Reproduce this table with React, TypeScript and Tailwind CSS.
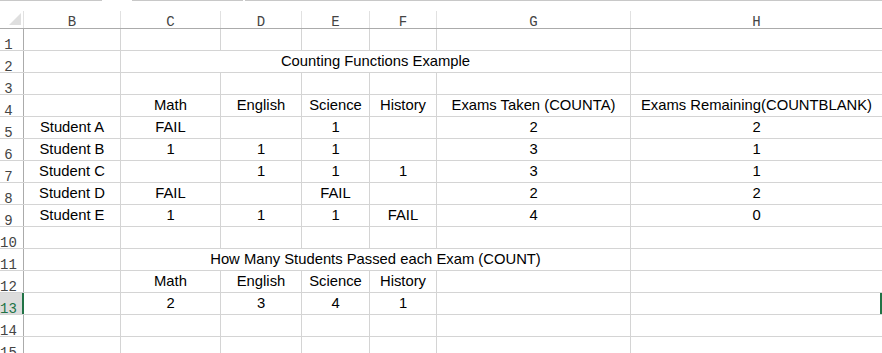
import React from "react";

// column widths include the 1px right border of each cell
const COLS = [
  { key: "B", w: "w-[97px]" },
  { key: "C", w: "w-[100px]" },
  { key: "D", w: "w-[81px]" },
  { key: "E", w: "w-[68px]" },
  { key: "F", w: "w-[67px]" },
  { key: "G", w: "w-[194px]" },
  { key: "H", w: "w-[251px]" },
];

type Row = { n: number; cells?: string[]; merged?: string };

const ROWS: Row[] = [
  { n: 1 },
  { n: 2, merged: "Counting Functions Example" },
  { n: 3 },
  { n: 4, cells: ["", "Math", "English", "Science", "History", "Exams Taken (COUNTA)", "Exams Remaining(COUNTBLANK)"] },
  { n: 5, cells: ["Student A", "FAIL", "", "1", "", "2", "2"] },
  { n: 6, cells: ["Student B", "1", "1", "1", "", "3", "1"] },
  { n: 7, cells: ["Student C", "", "1", "1", "1", "3", "1"] },
  { n: 8, cells: ["Student D", "FAIL", "", "FAIL", "", "2", "2"] },
  { n: 9, cells: ["Student E", "1", "1", "1", "FAIL", "4", "0"] },
  { n: 10 },
  { n: 11, merged: "How Many Students Passed each Exam (COUNT)" },
  { n: 12, cells: ["", "Math", "English", "Science", "History", "", ""] },
  { n: 13, cells: ["", "2", "3", "4", "1", "", ""] },
  { n: 14 },
  { n: 15 },
];

const ACTIVE_ROW = 13;

function RowHeader({ n }: { n: number }) {
  const active = n === ACTIVE_ROW;
  return (
    <div
      className={
        active
          ? "flex w-[24px] shrink-0 items-end justify-center border-r-2 border-[#217346] bg-[#dcdcdc] pr-[5px] font-['Liberation_Mono',monospace] text-[14px] leading-[10.5px] text-[#217346]"
          : "flex w-[24px] shrink-0 items-end justify-center border-r border-[#ababab] pr-[6px] font-['Liberation_Mono',monospace] text-[14px] leading-[10.5px] text-[#444]"
      }
    >
      {n}
    </div>
  );
}

function Cell({ w, text, last, active }: { w: string; text: string; last?: boolean; active?: boolean }) {
  let border = "border-r border-[#d4d4d4]";
  if (last) border = active ? "border-r-2 border-[#217346]" : "";
  return (
    <div className={`${w} ${border} flex shrink-0 items-end justify-center overflow-visible whitespace-nowrap pb-[3px] leading-[16px]`}>
      {text}
    </div>
  );
}

export default function App() {
  return (
    <div className="h-[353px] w-[882px] overflow-hidden bg-white font-['Liberation_Sans',Arial,sans-serif] text-[14.8px] text-black">
      {/* remains of the formula bar edge */}
      <div className="flex h-[11px] items-start">
        <div className="h-px w-[102px] bg-[#c8c8c8]" />
        <div className="ml-[30px] h-px w-[111px] bg-[#c8c8c8]" />
        <div className="ml-[2px] h-px flex-1 bg-[#c8c8c8]" />
      </div>

      {/* column headers */}
      <div className="flex h-[18px] border-b border-[#ababab]">
        <div className="relative w-[24px] shrink-0 border-r border-[#e1e1e1]">
          <svg className="absolute left-0 top-0" width="24" height="17" viewBox="0 0 24 17">
            <polygon points="21,2 21,14 9,14" fill="#dfdfdf" />
          </svg>
        </div>
        {COLS.map((c, i) => (
          <div
            key={c.key}
            className={`${c.w} ${i < COLS.length - 1 ? "border-r border-[#e1e1e1]" : ""} flex shrink-0 items-end justify-center font-['Liberation_Mono',monospace] text-[14px] leading-[12.5px] text-[#444]`}
          >
            {c.key}
          </div>
        ))}
      </div>

      {ROWS.map((r) => {
        const active = r.n === ACTIVE_ROW;
        return (
          <div key={r.n} className="flex h-[22px] border-b border-[#d4d4d4]">
            <RowHeader n={r.n} />
            {r.merged ? (
              <>
                <Cell w={COLS[0].w} text="" />
                <Cell w="w-[510px]" text={r.merged} />
                <Cell w={COLS[6].w} text="" last />
              </>
            ) : (
              COLS.map((c, i) => (
                <Cell
                  key={c.key}
                  w={c.w}
                  text={r.cells ? r.cells[i] : ""}
                  last={i === COLS.length - 1}
                  active={active}
                />
              ))
            )}
          </div>
        );
      })}
    </div>
  );
}
